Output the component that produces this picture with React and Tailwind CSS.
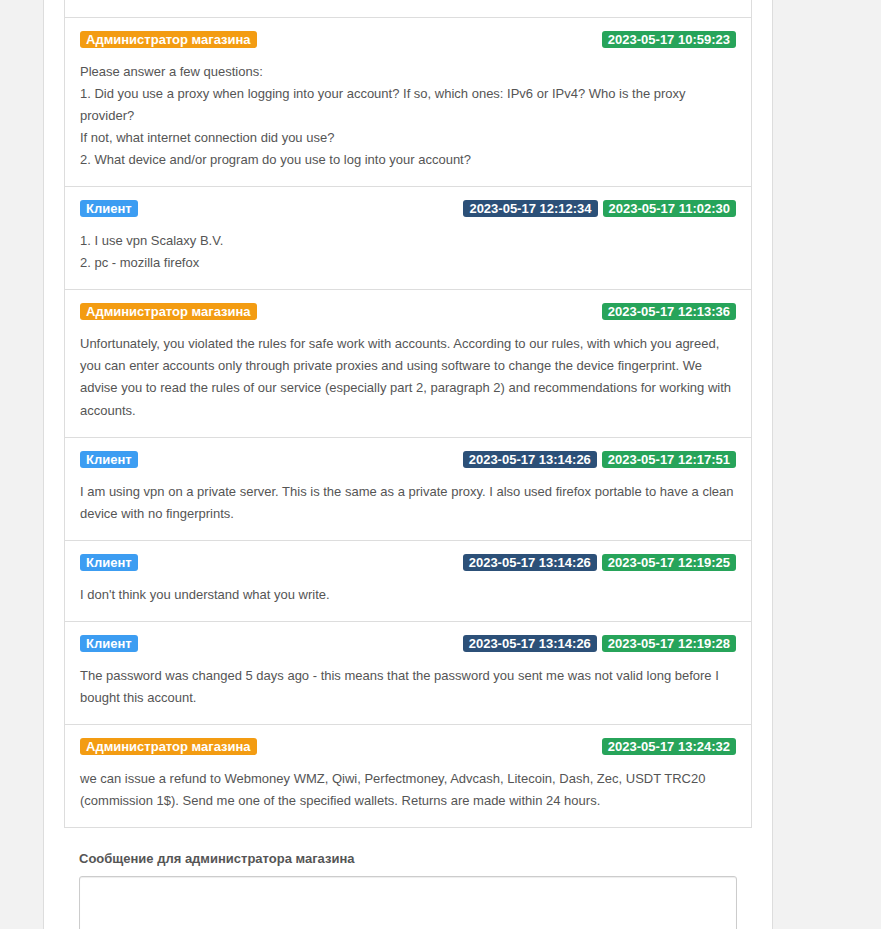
import React from "react";

const messages = [
  {
    role: "admin",
    dates: ["2023-05-17 10:59:23"],
    lines: [
      "Please answer a few questions:",
      "1. Did you use a proxy when logging into your account? If so, which ones: IPv6 or IPv4? Who is the proxy provider?",
      "If not, what internet connection did you use?",
      "2. What device and/or program do you use to log into your account?",
    ],
  },
  {
    role: "client",
    read: "2023-05-17 12:12:34",
    dates: ["2023-05-17 11:02:30"],
    lines: ["1. I use vpn Scalaxy B.V.", "2. pc - mozilla firefox"],
  },
  {
    role: "admin",
    dates: ["2023-05-17 12:13:36"],
    lines: [
      "Unfortunately, you violated the rules for safe work with accounts. According to our rules, with which you agreed, you can enter accounts only through private proxies and using software to change the device fingerprint. We advise you to read the rules of our service (especially part 2, paragraph 2) and recommendations for working with accounts.",
    ],
  },
  {
    role: "client",
    read: "2023-05-17 13:14:26",
    dates: ["2023-05-17 12:17:51"],
    lines: [
      "I am using vpn on a private server. This is the same as a private proxy. I also used firefox portable to have a clean device with no fingerprints.",
    ],
  },
  {
    role: "client",
    read: "2023-05-17 13:14:26",
    dates: ["2023-05-17 12:19:25"],
    lines: ["I don't think you understand what you write."],
  },
  {
    role: "client",
    read: "2023-05-17 13:14:26",
    dates: ["2023-05-17 12:19:28"],
    lines: [
      "The password was changed 5 days ago - this means that the password you sent me was not valid long before I bought this account.",
    ],
  },
  {
    role: "admin",
    dates: ["2023-05-17 13:24:32"],
    lines: [
      "we can issue a refund to Webmoney WMZ, Qiwi, Perfectmoney, Advcash, Litecoin, Dash, Zec, USDT TRC20 (commission 1$). Send me one of the specified wallets. Returns are made within 24 hours.",
    ],
  },
];

function Label({ color, children }) {
  return (
    <span
      className={`inline-block rounded-[3px] px-[6px] pt-[2px] pb-[2px] text-[13px] leading-[13px] font-bold text-white whitespace-nowrap ${color}`}
    >
      {children}
    </span>
  );
}

function Message({ msg }) {
  const isAdmin = msg.role === "admin";
  return (
    <div className="border-t border-[#dddddd] px-[15px] pt-[13px] pb-[15px]">
      <div className="flex justify-between items-start h-[17px]">
        {isAdmin ? (
          <Label color="bg-[#f39c12]">Администратор магазина</Label>
        ) : (
          <Label color="bg-[#3c9df2]">Клиент</Label>
        )}
        <div className="flex gap-[5px]">
          {msg.read && <Label color="bg-[#2c5078]">{msg.read}</Label>}
          {msg.dates.map((d) => (
            <Label key={d} color="bg-[#27a45a]">
              {d}
            </Label>
          ))}
        </div>
      </div>
      <div className="mt-[13px] text-[13px] leading-[1.7] text-[#555555]">
        {msg.lines.map((l, i) => (
          <div key={i}>{l}</div>
        ))}
      </div>
    </div>
  );
}

const App = () => {
  return (
    <div
      className="h-[929px] overflow-hidden bg-[#f2f2f2]"
      style={{ fontFamily: '"Liberation Sans", Arial, sans-serif' }}
    >
      <div className="ml-[43px] w-[730px] h-full bg-white border-x border-[#dddddd] px-[20px]">
        <div className="border-x border-b border-[#dddddd]">
          <div className="h-[16.6px]"></div>
          {messages.map((m, i) => (
            <Message key={i} msg={m} />
          ))}
        </div>
        <div className="px-[15px] pt-[22px]">
          <label className="block text-[13px] leading-[18px] font-bold text-[#555555] mb-[8px]">
            Сообщение для администратора магазина
          </label>
          <textarea className="block w-full h-[120px] border border-[#cccccc] rounded-[3px] shadow-[inset_0_1px_1px_rgba(0,0,0,0.075)] resize-none"></textarea>
        </div>
      </div>
    </div>
  );
};

export default App;
